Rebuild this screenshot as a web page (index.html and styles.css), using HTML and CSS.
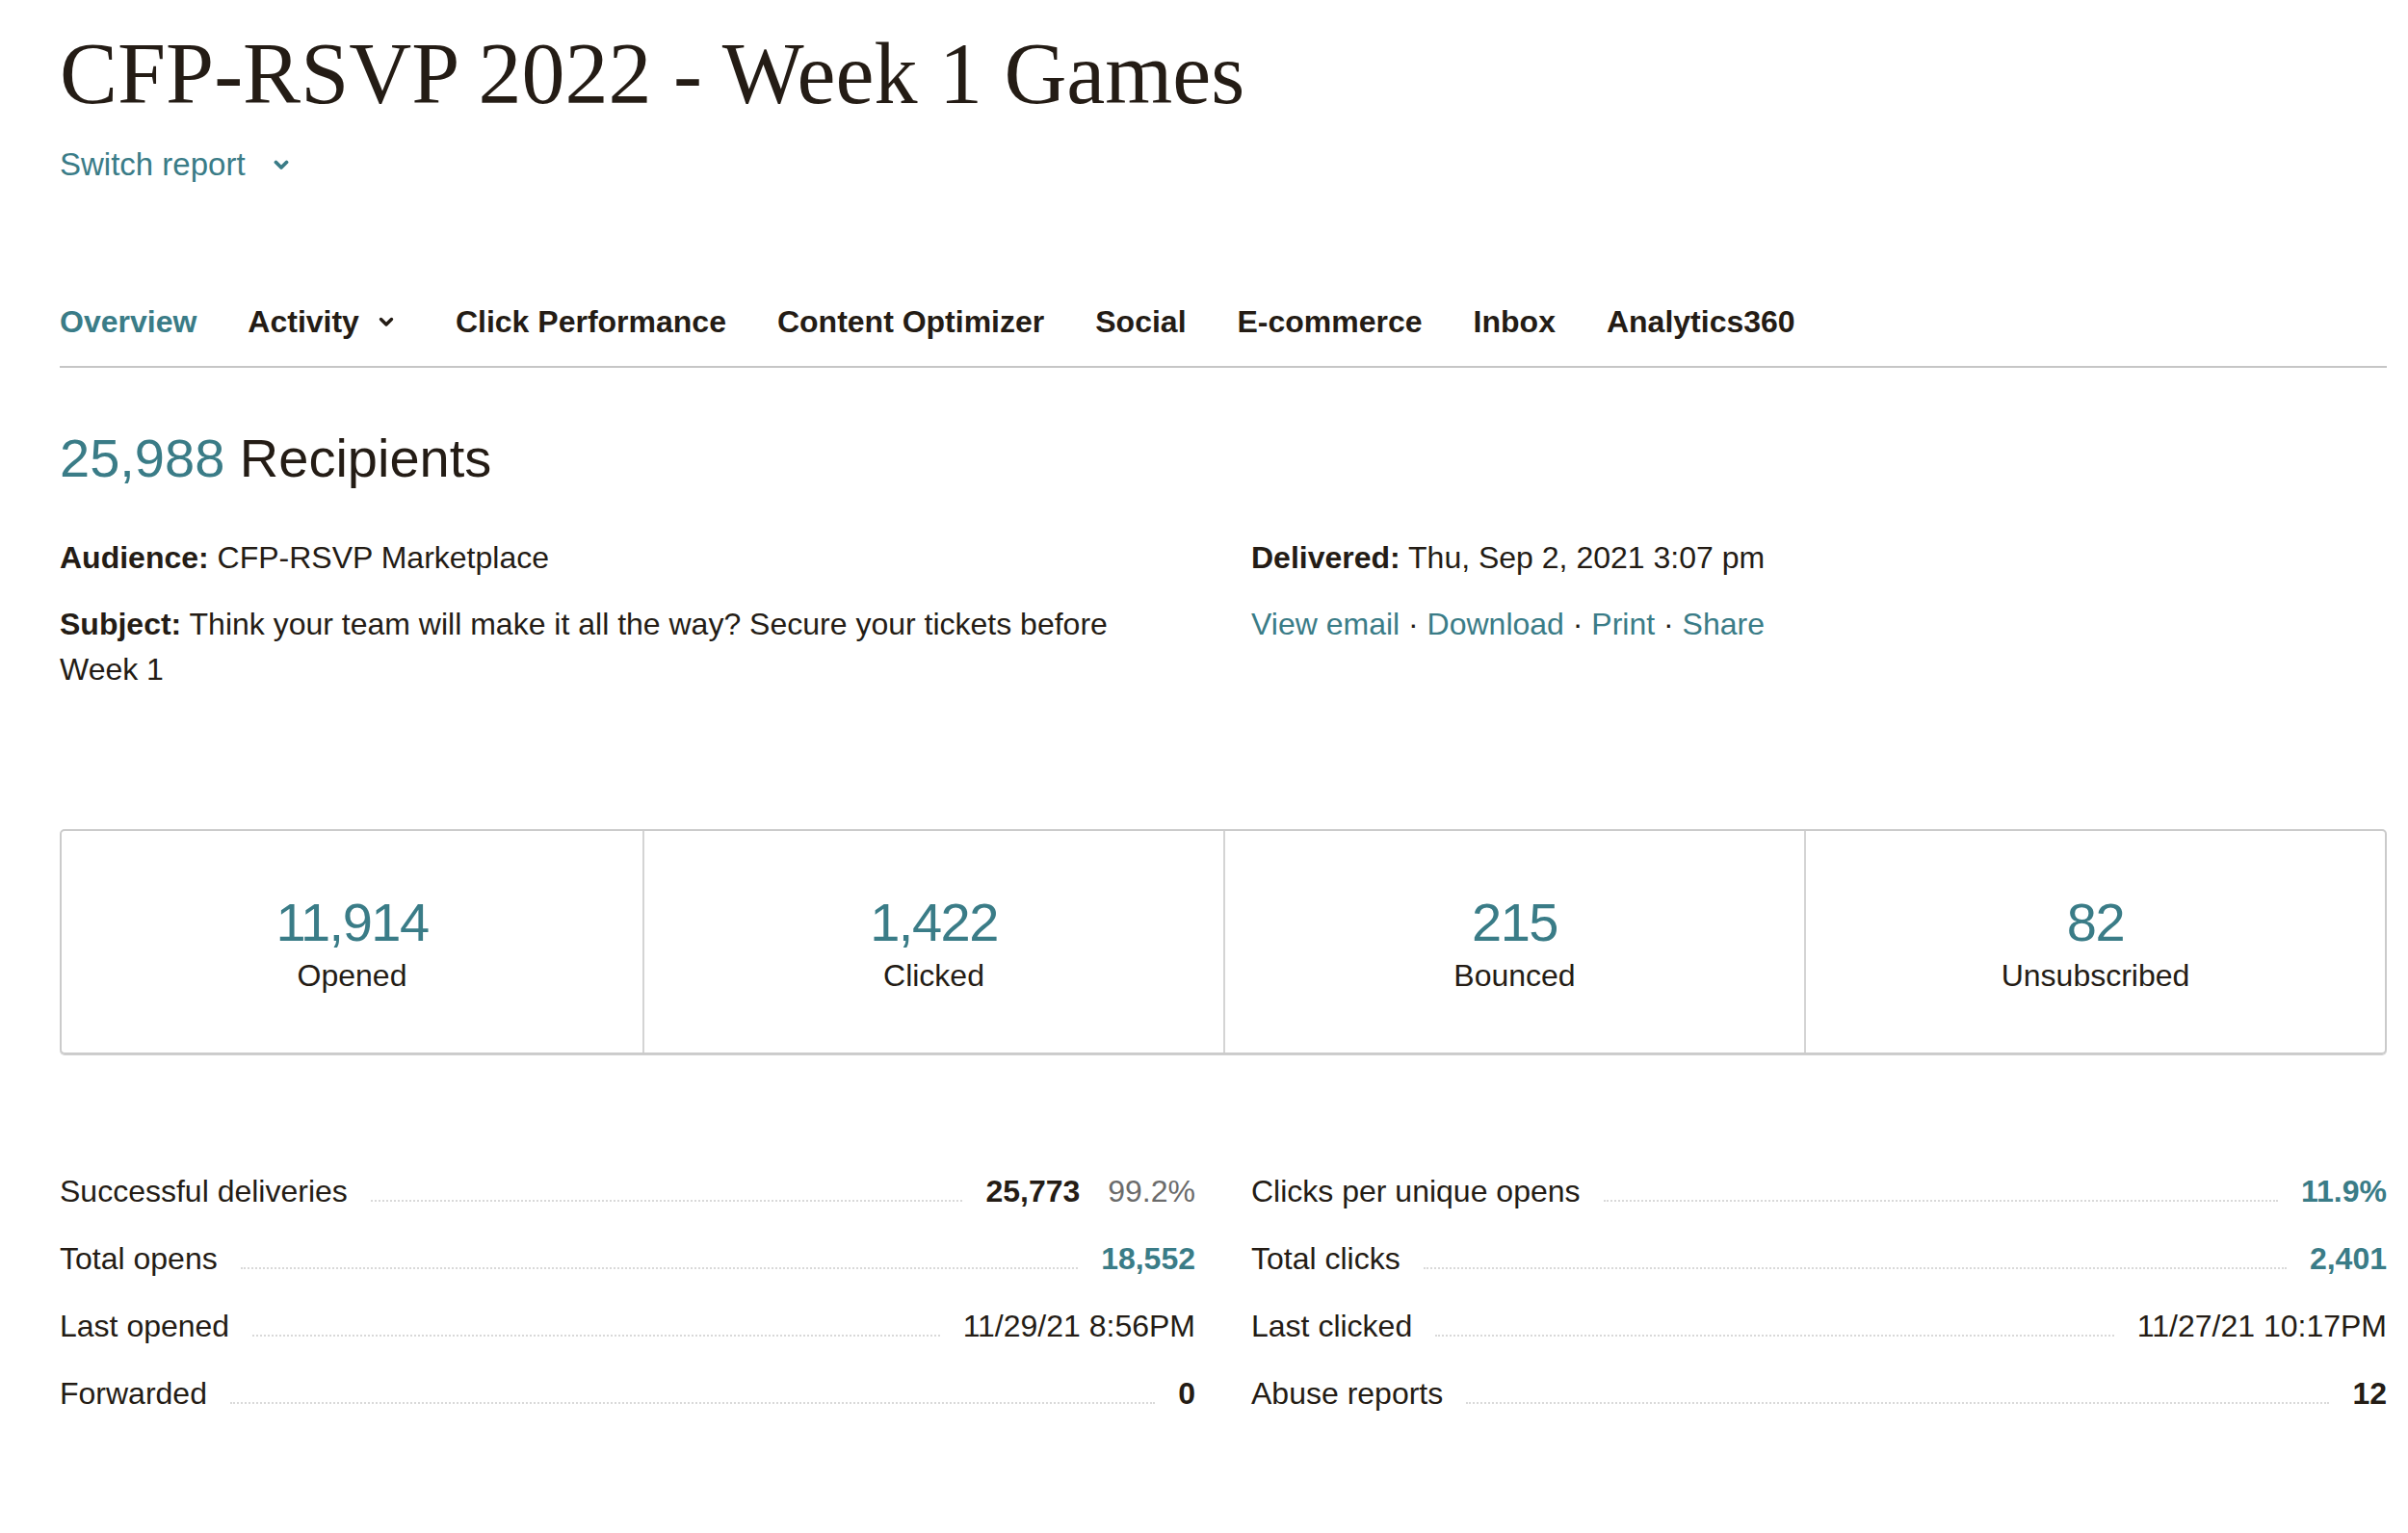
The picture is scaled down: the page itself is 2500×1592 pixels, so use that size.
FILE: index.html
```html
<!DOCTYPE html>
<html lang="en">
<head>
<meta charset="utf-8">
<title>CFP-RSVP 2022 - Week 1 Games</title>
<link rel="stylesheet" href="styles.css">
</head>
<body>
<main class="page">
  <h1 class="title">CFP-RSVP 2022 - Week 1 Games</h1>
  <div class="switch">
    <span>Switch report</span>
    <svg class="chev" width="16" height="11" viewBox="0 0 16 11"><polyline points="2.5,2.5 8,8 13.5,2.5" fill="none" stroke="currentColor" stroke-width="3.8" stroke-linecap="round" stroke-linejoin="round"/></svg>
  </div>

  <nav class="tabs">
    <a class="tab active">Overview</a>
    <a class="tab has-chev">Activity <svg class="chev nav-chev" width="16" height="11" viewBox="0 0 16 11"><polyline points="2.5,2.5 8,8 13.5,2.5" fill="none" stroke="currentColor" stroke-width="3.4" stroke-linecap="round" stroke-linejoin="round"/></svg></a>
    <a class="tab">Click Performance</a>
    <a class="tab">Content Optimizer</a>
    <a class="tab">Social</a>
    <a class="tab">E-commerce</a>
    <a class="tab">Inbox</a>
    <a class="tab">Analytics360</a>
  </nav>

  <h2 class="recipients"><span class="teal">25,988</span> Recipients</h2>

  <section class="info">
    <div class="col">
      <p class="line"><span class="lab">Audience:</span> CFP-RSVP Marketplace</p>
      <p class="line subject"><span class="lab">Subject:</span> Think your team will make it all the way? Secure your tickets before Week 1</p>
    </div>
    <div class="col">
      <p class="line"><span class="lab">Delivered:</span> Thu, Sep 2, 2021 3:07 pm</p>
      <p class="line links"><a>View email</a> · <a>Download</a> · <a>Print</a> · <a>Share</a></p>
    </div>
  </section>

  <section class="stats-box">
    <div class="stat"><div class="num">11,914</div><div class="lbl">Opened</div></div>
    <div class="stat"><div class="num">1,422</div><div class="lbl">Clicked</div></div>
    <div class="stat"><div class="num">215</div><div class="lbl">Bounced</div></div>
    <div class="stat"><div class="num">82</div><div class="lbl">Unsubscribed</div></div>
  </section>

  <section class="details">
    <div class="col">
      <div class="row"><span class="k">Successful deliveries</span><span class="dots"></span><span class="v"><b>25,773</b><span class="pct">99.2%</span></span></div>
      <div class="row"><span class="k">Total opens</span><span class="dots"></span><span class="v teal strong">18,552</span></div>
      <div class="row"><span class="k">Last opened</span><span class="dots"></span><span class="v">11/29/21 8:56PM</span></div>
      <div class="row"><span class="k">Forwarded</span><span class="dots"></span><span class="v"><b>0</b></span></div>
    </div>
    <div class="col">
      <div class="row"><span class="k">Clicks per unique opens</span><span class="dots"></span><span class="v teal strong">11.9%</span></div>
      <div class="row"><span class="k">Total clicks</span><span class="dots"></span><span class="v teal strong">2,401</span></div>
      <div class="row"><span class="k">Last clicked</span><span class="dots"></span><span class="v">11/27/21 10:17PM</span></div>
      <div class="row"><span class="k">Abuse reports</span><span class="dots"></span><span class="v"><b>12</b></span></div>
    </div>
  </section>
</main>
</body>
</html>
```

FILE: styles.css
```css
html, body {
  margin: 0;
  padding: 0;
  background: #ffffff;
}

body {
  font-family: "Liberation Sans", Arial, sans-serif;
  color: #241c15;
  font-size: 32px;
}

.page {
  padding: 23px 22px 0 62px;
}

.teal {
  color: #3a7c87;
}

.title {
  margin: 0;
  font-family: "Liberation Serif", "Times New Roman", serif;
  font-weight: 400;
  font-size: 90px;
  line-height: 108px;
  letter-spacing: 0;
  color: #241c15;
}

.switch {
  margin-top: 20px;
  display: flex;
  align-items: center;
  gap: 29px;
  color: #3a7c87;
  font-size: 33px;
  line-height: 40px;
}

.chev {
  display: block;
}

.tabs {
  margin-top: 123px;
  display: flex;
  align-items: center;
  gap: 53px;
  padding-bottom: 26px;
  border-bottom: 2px solid #c6c6c6;
}

.tab {
  display: flex;
  align-items: center;
  font-weight: 700;
  font-size: 32px;
  line-height: 40px;
  color: #241c15;
}

.tab.active {
  color: #3a7c87;
}

.nav-chev {
  margin-left: 20px;
  margin-right: 11px;
}

.recipients {
  margin: 62px 0 0;
  font-weight: 400;
  font-size: 56px;
  line-height: 64px;
}

.info {
  margin-top: 48px;
  display: grid;
  grid-template-columns: 1fr 1fr;
  column-gap: 58px;
}

.line {
  margin: 0;
  font-size: 32px;
  line-height: 47px;
}

.line + .line {
  margin-top: 22px;
}

.subject {
  padding-right: 40px;
}

.lab {
  font-weight: 700;
}

.links a {
  color: #3a7c87;
}

.stats-box {
  margin-top: 142px;
  display: grid;
  grid-template-columns: repeat(4, 1fr);
  border: 2px solid #cbcbcb;
  border-radius: 5px;
  box-shadow: 0 1px 0 #d0d0d0;
}

.stat {
  padding: 63px 0 60px;
  text-align: center;
}

.stat + .stat {
  border-left: 2px solid #d4d4d4;
}

.num {
  color: #3a7c87;
  font-size: 56px;
  line-height: 64px;
  letter-spacing: -1.5px;
}

.lbl {
  margin-top: 3px;
  font-size: 32px;
  line-height: 40px;
}

.details {
  margin-top: 107px;
  display: grid;
  grid-template-columns: 1fr 1fr;
  column-gap: 58px;
}

.row {
  display: flex;
  align-items: baseline;
  padding: 15px 0;
  line-height: 40px;
}

.dots {
  flex: 1;
  margin: 0 24px;
  border-bottom: 2px dotted #d9d9d9;
}

.v {
  white-space: nowrap;
}

.v b {
  font-weight: 700;
}

.strong {
  font-weight: 700;
}

.pct {
  margin-left: 29px;
  color: #6b6b6b;
}
```
